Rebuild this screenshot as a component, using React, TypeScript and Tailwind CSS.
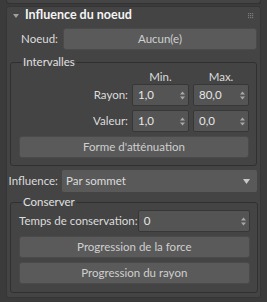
import React from "react";

function Arrows() {
  return (
    <svg width="5" height="9" viewBox="0 0 5 9" className="shrink-0">
      <path d="M0 3.5 L2.5 0.5 L5 3.5 Z" fill="#a8a8a8" />
      <path d="M0 5.5 L2.5 8.5 L5 5.5 Z" fill="#a8a8a8" />
    </svg>
  );
}

function Spinner({ value, className }: { value: string; className: string }) {
  return (
    <div
      className={
        "h-[22px] shrink-0 flex items-center justify-between pl-[5px] pr-[3px] bg-[#545454] border border-[#373737] rounded-[2px] text-[#e6e6e6] " +
        className
      }
    >
      <span>{value}</span>
      <Arrows />
    </div>
  );
}

function Button({ label, className }: { label: string; className?: string }) {
  return (
    <div
      className={
        "h-[22px] flex items-center justify-center bg-[#5a5a5a] border border-[#4a4a4a] rounded-[3px] text-[#cfcfcf] " +
        (className ?? "")
      }
    >
      {label}
    </div>
  );
}

function Group({ title, children, className }: { title: string; children: React.ReactNode; className?: string }) {
  return (
    <fieldset
      className={
        "mx-[3px] border border-[#303030] rounded-[3px] pl-[8px] pr-[7px] " + (className ?? "")
      }
    >
      <legend className="ml-[3px] px-[1px] leading-[14px] text-[#e0e0e0]">{title}</legend>
      {children}
    </fieldset>
  );
}

export default function App() {
  return (
    <div className="w-[267px] h-[302px] bg-[#3b3b3b] overflow-hidden font-['Lato',sans-serif] text-[11.5px] text-[#dcdcdc] select-none">
      <div className="mx-[6px] h-[4px] bg-[#444444] border-x border-b border-[#333333] rounded-b-[3px]" />
      <div className="mt-[2px] mx-[6px] h-[292px] bg-[#444444] border border-[#363636] rounded-[3px] flex flex-col">
        {/* header */}
        <div className="h-[17px] flex items-center pl-[6px] pr-[6px]">
          <svg width="6" height="4" viewBox="0 0 6 4" className="shrink-0">
            <path d="M0 0 L6 0 L3 4 Z" fill="#a0a0a0" />
          </svg>
          <span className="ml-[6px] font-bold text-[12.5px] text-[#f4f4f4] flex-1">Influence du noeud</span>
          <svg width="6" height="6" viewBox="0 0 6 6" className="shrink-0">
            {[0, 2, 4].map((y) =>
              [0, 2, 4].map((x) => <rect key={`${x}-${y}`} x={x} y={y} width="1.2" height="1.2" fill="#7a7a7a" />)
            )}
          </svg>
        </div>

        {/* Noeud row */}
        <div className="mt-[4px] flex items-center pr-[3px]">
          <span className="w-[51px] text-right">Noeud:</span>
          <Button label="Aucun(e)" className="ml-[5px] flex-1" />
        </div>

        {/* Intervalles */}
        <Group title="Intervalles" className="mt-[5px] pb-[7px]">
          <div className="flex items-center h-[15px] text-[#dcdcdc]">
            <span className="flex-1" />
            <span className="ml-[4px] w-[57px] text-center">Min.</span>
            <span className="ml-[4px] w-[56px] text-center">Max.</span>
          </div>
          <div className="flex items-center">
            <span className="flex-1 text-right">Rayon:</span>
            <Spinner value="1,0" className="ml-[4px] w-[57px]" />
            <Spinner value="80,0" className="ml-[4px] w-[56px]" />
          </div>
          <div className="mt-[4px] flex items-center">
            <span className="flex-1 text-right">Valeur:</span>
            <Spinner value="1,0" className="ml-[4px] w-[57px]" />
            <Spinner value="0,0" className="ml-[4px] w-[56px]" />
          </div>
          <Button label="Forme d'atténuation" className="mt-[4px]" />
        </Group>

        {/* Influence row */}
        <div className="mt-[4px] flex items-center pr-[3px]">
          <span className="w-[51px] text-right whitespace-nowrap">Influence:</span>
          <div className="ml-[4px] flex-1 h-[22px] flex items-center justify-between pl-[4px] pr-[7px] bg-[#595959] rounded-[2px] text-[#dcdcdc]">
            <span>Par sommet</span>
            <svg width="7" height="5" viewBox="0 0 7 5">
              <path d="M0 0 L7 0 L3.5 5 Z" fill="#c8c8c8" />
            </svg>
          </div>
        </div>

        {/* Conserver */}
        <Group title="Conserver" className="mt-[3px] pb-[8px]">
          <div className="mt-[1px] flex items-center">
            <span className="flex-1 whitespace-nowrap">Temps de conservation:</span>
            <Spinner value="0" className="w-[112px]" />
          </div>
          <Button label="Progression de la force" className="mt-[4px]" />
          <Button label="Progression du rayon" className="mt-[4px]" />
        </Group>
      </div>
    </div>
  );
}
